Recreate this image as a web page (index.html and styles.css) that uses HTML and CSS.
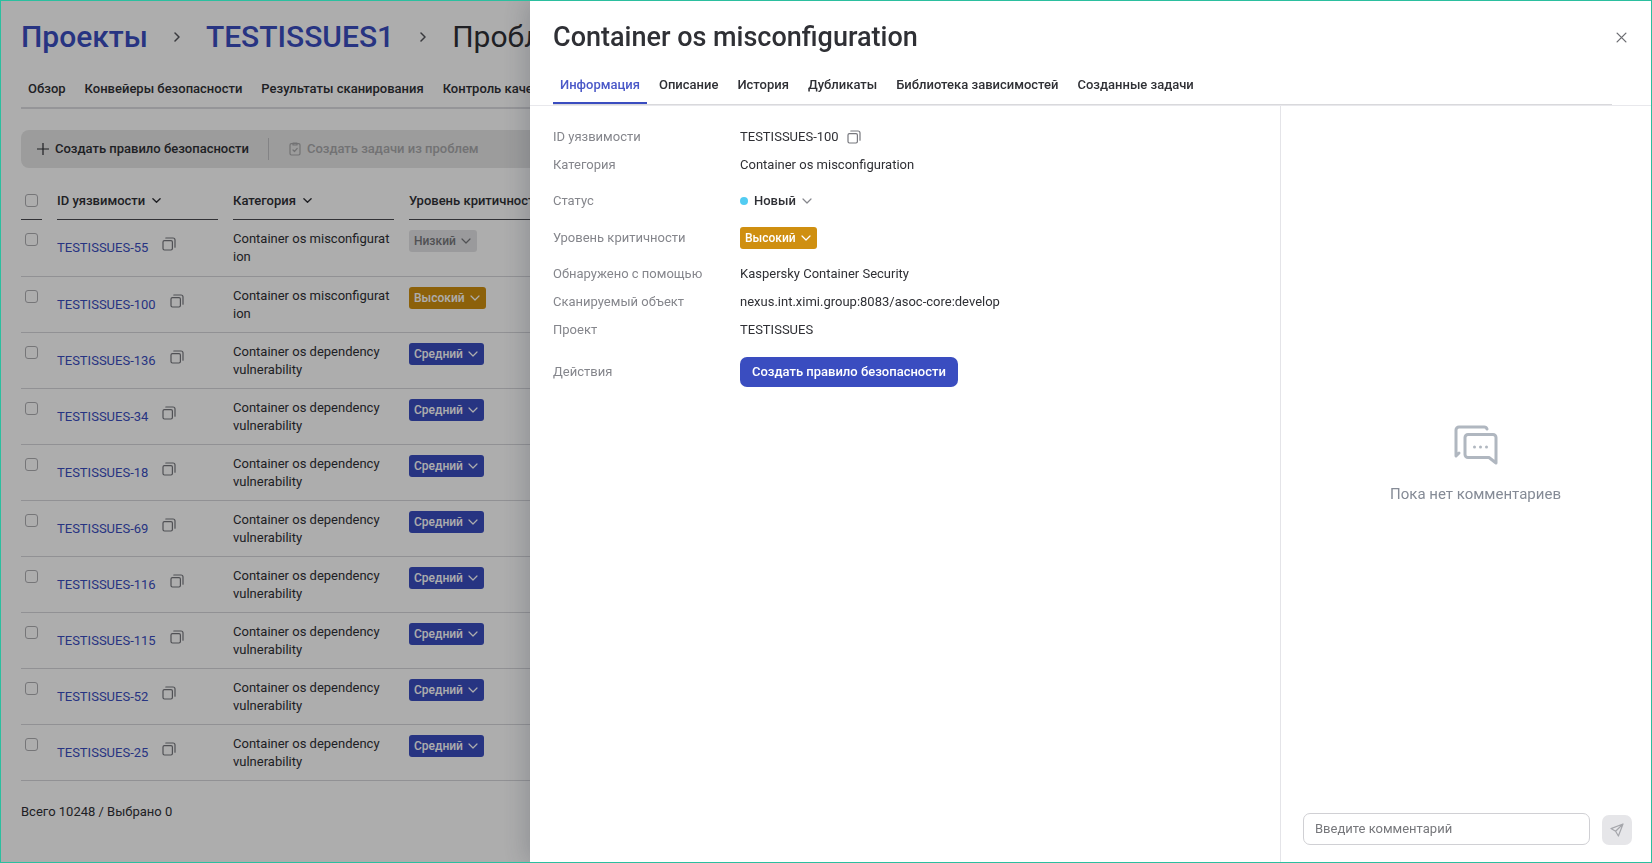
FILE: index.html
```html
<!DOCTYPE html>
<html lang="ru">
<head>
    <meta charset="UTF-8">
    <meta name="viewport" content="width=device-width, initial-scale=1.0">
    <title>Container os misconfiguration</title>
    <link rel="stylesheet" href="styles.css">
</head>
<body>
    <svg class="sprite" aria-hidden="true">
        <symbol id="icon-copy" viewBox="0 0 14 14">
            <rect x="1" y="3.6" width="9.4" height="9.4" rx="1.4"/>
            <path d="M3.8 1h7.2a2 2 0 0 1 2 2v7.2"/>
        </symbol>
        <symbol id="icon-chevron" viewBox="0 0 10 10">
            <path d="M1 3l4 4 4-4"/>
        </symbol>
        <symbol id="icon-right" viewBox="0 0 10 10">
            <path d="M3 1l4 4-4 4"/>
        </symbol>
    </svg>

    <main class="page">
        <nav class="breadcrumbs" aria-label="Навигация">
            <a href="#">Проекты</a>
            <svg class="crumb-arrow"><use href="#icon-right"/></svg>
            <a href="#">TESTISSUES1</a>
            <svg class="crumb-arrow"><use href="#icon-right"/></svg>
            <span>Проблемы</span>
        </nav>

        <nav class="tabs page-tabs">
            <a class="tab" href="#">Обзор</a>
            <a class="tab" href="#">Конвейеры безопасности</a>
            <a class="tab" href="#">Результаты сканирования</a>
            <a class="tab" href="#">Контроль качества</a>
        </nav>

        <div class="toolbar">
            <button class="tool" type="button">
                <svg class="icon-plus" viewBox="0 0 12 12"><path d="M6 0v12M0 6h12"/></svg>
                Создать правило безопасности
            </button>
            <button class="tool" type="button" disabled>
                <svg class="icon-task" viewBox="0 0 12 14"><rect x="1" y="1.6" width="10" height="11.4" rx="1.4"/><path d="M4 1v2h4V1zM4 8l1.5 1.5L8.2 6.4"/></svg>
                Создать задачи из проблем
            </button>
        </div>

        <table class="issues">
            <colgroup>
                <col class="col-check">
                <col class="col-id">
                <col class="col-category">
                <col>
            </colgroup>
            <thead>
                <tr>
                    <th><div class="head"><input type="checkbox" aria-label="Выбрать все"></div></th>
                    <th><div class="head">ID уязвимости <svg class="icon-sort"><use href="#icon-chevron"/></svg></div></th>
                    <th><div class="head">Категория <svg class="icon-sort"><use href="#icon-chevron"/></svg></div></th>
                    <th><div class="head">Уровень критичности</div></th>
                </tr>
            </thead>
            <tbody>
                <tr>
                    <td><input type="checkbox" aria-label="TESTISSUES-55"></td>
                    <td><div class="issue-id"><a href="#">TESTISSUES-55</a><button class="copy" type="button" aria-label="Копировать"><svg><use href="#icon-copy"/></svg></button></div></td>
                    <td>Container&nbsp;os&nbsp;misconfigurat<wbr>ion</td>
                    <td><button class="badge low" type="button">Низкий <svg><use href="#icon-chevron"/></svg></button></td>
                </tr>
                <tr>
                    <td><input type="checkbox" aria-label="TESTISSUES-100"></td>
                    <td><div class="issue-id"><a href="#">TESTISSUES-100</a><button class="copy" type="button" aria-label="Копировать"><svg><use href="#icon-copy"/></svg></button></div></td>
                    <td>Container&nbsp;os&nbsp;misconfigurat<wbr>ion</td>
                    <td><button class="badge high" type="button">Высокий <svg><use href="#icon-chevron"/></svg></button></td>
                </tr>
                <tr>
                    <td><input type="checkbox" aria-label="TESTISSUES-136"></td>
                    <td><div class="issue-id"><a href="#">TESTISSUES-136</a><button class="copy" type="button" aria-label="Копировать"><svg><use href="#icon-copy"/></svg></button></div></td>
                    <td>Container os dependency vulnerability</td>
                    <td><button class="badge medium" type="button">Средний <svg><use href="#icon-chevron"/></svg></button></td>
                </tr>
                <tr>
                    <td><input type="checkbox" aria-label="TESTISSUES-34"></td>
                    <td><div class="issue-id"><a href="#">TESTISSUES-34</a><button class="copy" type="button" aria-label="Копировать"><svg><use href="#icon-copy"/></svg></button></div></td>
                    <td>Container os dependency vulnerability</td>
                    <td><button class="badge medium" type="button">Средний <svg><use href="#icon-chevron"/></svg></button></td>
                </tr>
                <tr>
                    <td><input type="checkbox" aria-label="TESTISSUES-18"></td>
                    <td><div class="issue-id"><a href="#">TESTISSUES-18</a><button class="copy" type="button" aria-label="Копировать"><svg><use href="#icon-copy"/></svg></button></div></td>
                    <td>Container os dependency vulnerability</td>
                    <td><button class="badge medium" type="button">Средний <svg><use href="#icon-chevron"/></svg></button></td>
                </tr>
                <tr>
                    <td><input type="checkbox" aria-label="TESTISSUES-69"></td>
                    <td><div class="issue-id"><a href="#">TESTISSUES-69</a><button class="copy" type="button" aria-label="Копировать"><svg><use href="#icon-copy"/></svg></button></div></td>
                    <td>Container os dependency vulnerability</td>
                    <td><button class="badge medium" type="button">Средний <svg><use href="#icon-chevron"/></svg></button></td>
                </tr>
                <tr>
                    <td><input type="checkbox" aria-label="TESTISSUES-116"></td>
                    <td><div class="issue-id"><a href="#">TESTISSUES-116</a><button class="copy" type="button" aria-label="Копировать"><svg><use href="#icon-copy"/></svg></button></div></td>
                    <td>Container os dependency vulnerability</td>
                    <td><button class="badge medium" type="button">Средний <svg><use href="#icon-chevron"/></svg></button></td>
                </tr>
                <tr>
                    <td><input type="checkbox" aria-label="TESTISSUES-115"></td>
                    <td><div class="issue-id"><a href="#">TESTISSUES-115</a><button class="copy" type="button" aria-label="Копировать"><svg><use href="#icon-copy"/></svg></button></div></td>
                    <td>Container os dependency vulnerability</td>
                    <td><button class="badge medium" type="button">Средний <svg><use href="#icon-chevron"/></svg></button></td>
                </tr>
                <tr>
                    <td><input type="checkbox" aria-label="TESTISSUES-52"></td>
                    <td><div class="issue-id"><a href="#">TESTISSUES-52</a><button class="copy" type="button" aria-label="Копировать"><svg><use href="#icon-copy"/></svg></button></div></td>
                    <td>Container os dependency vulnerability</td>
                    <td><button class="badge medium" type="button">Средний <svg><use href="#icon-chevron"/></svg></button></td>
                </tr>
                <tr>
                    <td><input type="checkbox" aria-label="TESTISSUES-25"></td>
                    <td><div class="issue-id"><a href="#">TESTISSUES-25</a><button class="copy" type="button" aria-label="Копировать"><svg><use href="#icon-copy"/></svg></button></div></td>
                    <td>Container os dependency vulnerability</td>
                    <td><button class="badge medium" type="button">Средний <svg><use href="#icon-chevron"/></svg></button></td>
                </tr>
            </tbody>
        </table>

        <p class="total">Всего 10248 / Выбрано 0</p>
    </main>

    <div class="overlay"></div>

    <aside class="drawer" role="dialog" aria-labelledby="drawerTitle">
        <header class="drawer-header">
            <div class="drawer-top">
                <h1 id="drawerTitle">Container os misconfiguration</h1>
                <button class="close" type="button" aria-label="Закрыть"><svg viewBox="0 0 10 10"><path d="M1 1l8 8M9 1l-8 8"/></svg></button>
            </div>
            <nav class="tabs drawer-tabs">
                <a class="tab active" href="#">Информация</a>
                <a class="tab" href="#">Описание</a>
                <a class="tab" href="#">История</a>
                <a class="tab" href="#">Дубликаты</a>
                <a class="tab" href="#">Библиотека зависимостей</a>
                <a class="tab" href="#">Созданные задачи</a>
            </nav>
        </header>

        <div class="drawer-body">
            <dl class="info">
                <dt>ID уязвимости</dt>
                <dd>TESTISSUES-100 <button class="copy" type="button" aria-label="Копировать"><svg><use href="#icon-copy"/></svg></button></dd>
                <dt>Категория</dt>
                <dd>Container os misconfiguration</dd>
                <dt class="tall">Статус</dt>
                <dd class="tall"><button class="status" type="button"><span class="dot"></span>Новый <svg><use href="#icon-chevron"/></svg></button></dd>
                <dt class="severity">Уровень критичности</dt>
                <dd class="severity"><button class="badge high" type="button">Высокий <svg><use href="#icon-chevron"/></svg></button></dd>
                <dt>Обнаружено с помощью</dt>
                <dd>Kaspersky Container Security</dd>
                <dt>Сканируемый объект</dt>
                <dd>nexus.int.ximi.group:8083/asoc-core:develop</dd>
                <dt>Проект</dt>
                <dd>TESTISSUES</dd>
                <dt class="actions">Действия</dt>
                <dd class="actions"><button class="primary" type="button">Создать правило безопасности</button></dd>
            </dl>

            <section class="comments">
                <div class="empty">
                    <svg viewBox="0 0 44 40">
                        <path d="M5 28l-3 3V5a3 3 0 0 1 3-3h25a3 3 0 0 1 3 2"/>
                        <path d="M14 9.500h25a3 3 0 0 1 3 3V38l-7-5.500H14a3 3 0 0 1-3-3v-17a3 3 0 0 1 3-3z"/>
                        <g class="dots"><circle cx="20.500" cy="22" r="1.500"/><circle cx="26.500" cy="22" r="1.500"/><circle cx="32.500" cy="22" r="1.500"/></g>
                    </svg>
                    <p>Пока нет комментариев</p>
                </div>
                <form class="comment-form">
                    <input type="text" placeholder="Введите комментарий" aria-label="Комментарий">
                    <button class="send" type="button" aria-label="Отправить" disabled><svg viewBox="0 0 14 14"><path d="M13 1L1 5.600l4.600 2.700L8.400 13zM13 1L5.600 8.300"/></svg></button>
                </form>
            </section>
        </div>
    </aside>
</body>
</html>
```
FILE: styles.css
```css
* {
    box-sizing: border-box;
}
body {
    margin: 0;
    min-height: 100vh;
    overflow: hidden;
    background-color: #fff;
    color: #2f3035;
    font-family: Roboto, "Liberation Sans", sans-serif;
    font-size: 13px;
    line-height: 18px;
}
body::after {
    content: "";
    position: fixed;
    inset: 0;
    z-index: 3;
    border: 1px solid #2bbf9f;
    pointer-events: none;
}
a {
    color: #3a4dc0;
    text-decoration: none;
}
button,
input {
    font: inherit;
    color: inherit;
}
button {
    padding: 0;
    border: 0;
    background: none;
}
svg {
    display: block;
    flex: none;
    fill: none;
    stroke: currentColor;
    stroke-width: 1.2;
    stroke-linecap: round;
    stroke-linejoin: round;
}
.sprite {
    position: absolute;
    width: 0;
    height: 0;
}

/* Page */
.page {
    padding: 17px 21px 0;
}
.breadcrumbs {
    display: flex;
    align-items: center;
    gap: 24px;
    height: 40px;
    font-size: 30px;
    line-height: 40px;
}
.breadcrumbs a {
    font-weight: 500;
}
.crumb-arrow {
    width: 10px;
    height: 10px;
    color: #55565c;
    stroke-width: 1.5;
}
.tabs {
    display: flex;
    gap: 5px;
}
.tab {
    padding: 0 7px;
    color: #2f3035;
    font-weight: 500;
    white-space: nowrap;
}
.page-tabs {
    margin-top: 23px;
    height: 29px;
    border-bottom: 2px solid #dcdce0;
}
.toolbar {
    display: flex;
    align-items: center;
    margin-top: 21px;
    height: 38px;
    border-radius: 8px;
    background-color: #e6e6e6;
}
.tool {
    display: flex;
    align-items: center;
    gap: 6px;
    height: 22px;
    padding: 0 19px 0 16px;
    font-weight: 500;
    white-space: nowrap;
}
.tool + .tool {
    border-left: 1px solid #c2c2c4;
    padding-left: 20px;
}
.tool:disabled {
    color: #a9a9ab;
}
.icon-plus {
    width: 12px;
    height: 12px;
}
.icon-task {
    width: 12px;
    height: 14px;
}

/* Issues table */
.issues {
    width: 100%;
    table-layout: fixed;
    border-collapse: collapse;
}
.col-check {
    width: 36px;
}
.col-id,
.col-category {
    width: 176px;
}
th,
td {
    padding: 0 15px 0 0;
    text-align: left;
    vertical-align: top;
}
th {
    padding-top: 14px;
    font-weight: 500;
    white-space: nowrap;
}
.head {
    display: flex;
    align-items: center;
    gap: 7px;
    height: 38px;
    border-bottom: 1px solid #4a4b50;
}
.icon-sort {
    width: 9px;
    height: 9px;
    stroke-width: 1.5;
}
td {
    height: 56px;
    padding-top: 10px;
    border-bottom: 1px solid #d6d6da;
}
input[type="checkbox"] {
    appearance: none;
    display: block;
    width: 13px;
    height: 13px;
    margin: 3px 0 0 4px;
    border: 1px solid #aeaeb2;
    border-radius: 3px;
    background-color: #fff;
}
.head input[type="checkbox"] {
    margin-top: 0;
}
.issue-id {
    display: flex;
    gap: 14px;
    padding-top: 7px;
}
.issue-id a {
    padding-top: 2px;
}
.copy {
    width: 14px;
    height: 14px;
    color: #77787e;
}
.copy svg {
    width: 14px;
    height: 14px;
}
.badge {
    display: inline-flex;
    align-items: center;
    gap: 5px;
    height: 22px;
    padding: 0 6px 0 5px;
    border-radius: 3px;
    color: #fff;
    font-size: 12px;
    font-weight: 500;
    vertical-align: top;
}
.badge svg,
.status svg {
    width: 10px;
    height: 10px;
}
.low {
    background-color: #e4e4e6;
    color: #77787c;
}
.medium {
    background-color: #3a4dc0;
}
.high {
    background-color: #cf8f10;
}
.total {
    margin: 22px 0 0;
}

/* Drawer */
.overlay {
    position: fixed;
    inset: 0;
    z-index: 1;
    background-color: rgba(0, 0, 0, 0.32);
}
.drawer {
    position: fixed;
    inset: 0 0 0 530px;
    z-index: 2;
    display: flex;
    flex-direction: column;
    background-color: #fff;
    box-shadow: -4px 0 24px rgba(30, 40, 60, 0.22);
}
.drawer-header {
    padding: 20px 40px 0 23px;
    border-bottom: 1px solid #e8e8ec;
}
.drawer-top {
    display: flex;
    align-items: center;
    justify-content: space-between;
    height: 34px;
}
.drawer-top h1 {
    margin: 0;
    font-size: 27px;
    font-weight: 500;
    line-height: 34px;
}
.close {
    width: 11px;
    height: 11px;
    margin-right: -15px;
    color: #6c6d72;
}
.close svg {
    width: 11px;
    height: 11px;
}
.drawer-tabs {
    margin-top: 22px;
    border-bottom: 1px solid #d9d9dc;
}
.drawer-tabs .tab {
    height: 28px;
    border-bottom: 2px solid transparent;
}
.drawer-tabs .active {
    border-color: #3a4dc0;
    color: #4a58c8;
}
.drawer-body {
    display: flex;
    flex: 1;
    min-height: 0;
}
.info {
    display: grid;
    grid-template-columns: 187px 1fr;
    align-content: start;
    flex: 1;
    margin: 0;
    padding: 17px 23px;
}
.info dt,
.info dd {
    display: flex;
    align-items: center;
    gap: 8px;
    min-height: 28px;
    margin: 0;
}
.info dt {
    color: #85868c;
}
.info .tall {
    min-height: 43px;
}
.info .severity {
    min-height: 38px;
    padding-bottom: 7px;
}
.info .actions {
    min-height: 56px;
}
.status {
    display: flex;
    align-items: center;
    gap: 6px;
    font-weight: 500;
}
.status svg {
    color: #85868c;
}
.dot {
    width: 8px;
    height: 8px;
    border-radius: 50%;
    background-color: #52ccf2;
}
.primary {
    height: 30px;
    padding: 0 12px;
    border-radius: 7px;
    background-color: #3a4dc0;
    color: #fff;
    font-weight: 500;
}
.comments {
    display: flex;
    flex-direction: column;
    width: 372px;
    padding: 0 20px 18px 22px;
    border-left: 1px solid #e4e4e8;
}
.empty {
    display: flex;
    flex: 1;
    flex-direction: column;
    align-items: center;
    justify-content: center;
    padding: 9px 0 0 16px;
    color: #858b96;
    font-size: 15px;
}
.empty svg {
    width: 44px;
    height: 40px;
    color: #b0b7c0;
    stroke-width: 3;
}
.empty .dots {
    fill: currentColor;
    stroke: none;
}
.empty p {
    margin: 20px 0 0;
}
.comment-form {
    display: flex;
    align-items: flex-end;
    gap: 12px;
}
.comment-form input {
    flex: 1;
    min-width: 0;
    height: 32px;
    padding: 0 11px 2px;
    border: 1px solid #d0d0d4;
    border-radius: 7px;
}
.comment-form input::placeholder {
    color: #77787c;
}
.send {
    display: flex;
    align-items: center;
    justify-content: center;
    width: 30px;
    height: 30px;
    border-radius: 7px;
    background-color: #e6e6e9;
    color: #a6a7ac;
}
.send svg {
    width: 14px;
    height: 14px;
}
```
